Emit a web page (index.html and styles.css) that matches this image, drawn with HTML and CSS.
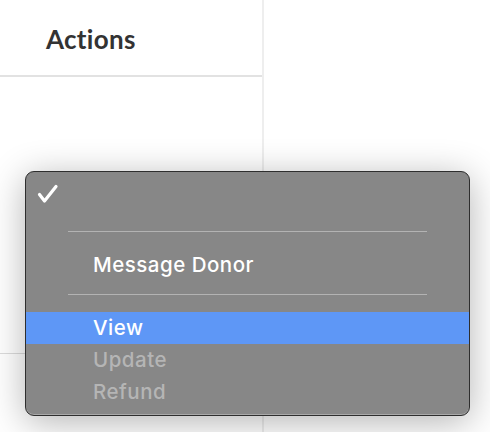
FILE: index.html
```html
<!DOCTYPE html>
<html>
<head>
<meta charset="utf-8">
<link rel="stylesheet" href="styles.css">
</head>
<body>
<div class="page">
  <div class="table">
    <div class="col">
      <div class="th">Actions</div>
      <div class="td"></div>
    </div>
  </div>
  <div class="menu">
    <div class="check-row">
      <svg class="check" width="22" height="20" viewBox="0 0 22 20"><polyline points="2.5,10.5 7.5,17 19,2.5" fill="none" stroke="#fff" stroke-width="3.2" stroke-linecap="round" stroke-linejoin="round"/></svg>
    </div>
    <div class="sep sep1"></div>
    <div class="item">Message Donor</div>
    <div class="sep sep2"></div>
    <div class="item active">View</div>
    <div class="item disabled">Update</div>
    <div class="item disabled">Refund</div>
  </div>
</div>
</body>
</html>
```

FILE: styles.css
```css
html, body {
  margin: 0;
  padding: 0;
  background: #fff;
}
.page {
  position: relative;
  width: 490px;
  height: 432px;
  overflow: hidden;
}
.table {
  display: flex;
}
.col {
  width: 262px;
  border-right: 2px solid #eeeeee;
  height: 432px;
}
.th {
  height: 77px;
  box-sizing: border-box;
  border-bottom: 2px solid #e2e2e2;
  padding-left: 46px;
  padding-top: 22px;
  font-family: Lato, "Open Sans", sans-serif;
  font-weight: 700;
  font-size: 26px;
  line-height: 34px;
  color: #333;
  letter-spacing: 0.3px;
}
.td {
  height: 276px;
  border-bottom: 1px solid #dcdcdc;
}
.menu {
  position: absolute;
  left: 25px;
  top: 171px;
  width: 445px;
  height: 245px;
  box-sizing: border-box;
  background: #878787;
  border: 1px solid #2e2e2e;
  border-radius: 9px;
  box-shadow: inset 0 -1px 0 #a9a9a9, 0 6px 36px rgba(0, 0, 0, 0.3);
  font-family: Inter, "Noto Sans", sans-serif;
  font-size: 20.5px;
  font-weight: 500;
  letter-spacing: 0.5px;
  color: #fff;
  display: flex;
  flex-direction: column;
}
.check-row {
  height: 43px;
  padding-left: 11px;
  display: flex;
  align-items: center;
}
.sep {
  height: 1px;
  background: #b3b3b3;
  margin: 16px 42px 17px;
}
.sep2 {
  margin: 13px 42px 17px;
}
.item {
  height: 32px;
  line-height: 32px;
  padding-left: 67px;
}
.item.active {
  background: #5e97f6;
}
.item.disabled {
  color: #b5b5b5;
}
```
